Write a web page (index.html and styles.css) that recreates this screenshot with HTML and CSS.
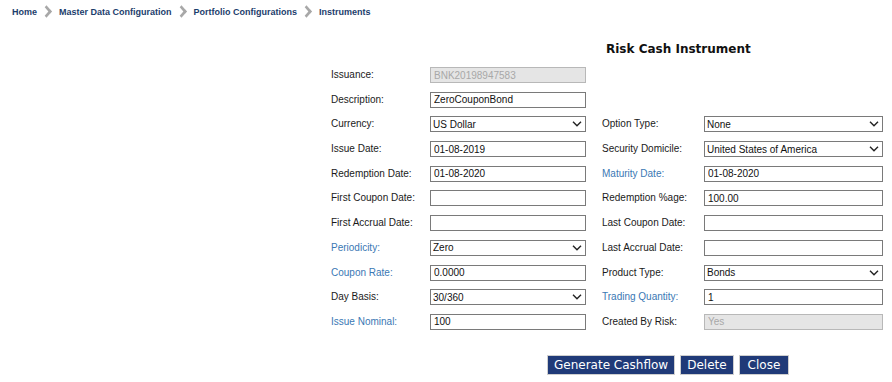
FILE: index.html
```html
<!DOCTYPE html>
<html lang="en">
  <head>
    <meta charset="UTF-8" />
    <title>Risk Cash Instrument</title>
    <link rel="stylesheet" href="styles.css">
  </head>
  <body>
    <div class="breadcrumb">
      <a href="#">Home</a>
      <span class="sep"></span>
      <a href="#">Master Data Configuration</a>
      <span class="sep"></span>
      <a href="#">Portfolio Configurations</a>
      <span class="sep"></span>
      <a href="#">Instruments</a>
    </div>

    <h1 class="page-title">Risk Cash Instrument</h1>

    <form class="instrument-form">
      <div class="form-row">
        <label>Issuance:</label>
        <input type="text" class="disabled" value="BNK20198947583" disabled />
      </div>

      <div class="form-row">
        <label>Description:</label>
        <input type="text" value="ZeroCouponBond" />
      </div>

      <div class="form-row">
        <label>Currency:</label>
        <select><option>US Dollar</option></select>
        <label class="right">Option Type:</label>
        <select><option>None</option></select>
      </div>

      <div class="form-row">
        <label>Issue Date:</label>
        <input type="text" value="01-08-2019" />
        <label class="right">Security Domicile:</label>
        <select><option>United States of America</option></select>
      </div>

      <div class="form-row">
        <label>Redemption Date:</label>
        <input type="text" value="01-08-2020" />
        <label class="right req">Maturity Date:</label>
        <input type="text" value="01-08-2020" />
      </div>

      <div class="form-row">
        <label>First Coupon Date:</label>
        <input type="text" value="" />
        <label class="right">Redemption %age:</label>
        <input type="text" value="100.00" />
      </div>

      <div class="form-row">
        <label>First Accrual Date:</label>
        <input type="text" value="" />
        <label class="right">Last Coupon Date:</label>
        <input type="text" value="" />
      </div>

      <div class="form-row">
        <label class="req">Periodicity:</label>
        <select><option>Zero</option></select>
        <label class="right">Last Accrual Date:</label>
        <input type="text" value="" />
      </div>

      <div class="form-row">
        <label class="req">Coupon Rate:</label>
        <input type="text" value="0.0000" />
        <label class="right">Product Type:</label>
        <select><option>Bonds</option></select>
      </div>

      <div class="form-row">
        <label>Day Basis:</label>
        <select><option>30/360</option></select>
        <label class="right req">Trading Quantity:</label>
        <input type="text" value="1" />
      </div>

      <div class="form-row">
        <label class="req">Issue Nominal:</label>
        <input type="text" value="100" />
        <label class="right">Created By Risk:</label>
        <input type="text" class="disabled" value="Yes" disabled />
      </div>
    </form>

    <div class="actions">
      <button class="button">Generate Cashflow</button>
      <button class="button">Delete</button>
      <button class="button close">Close</button>
    </div>
  </body>
</html>
```

FILE: styles.css
```css
:root {
  --link-color: #1c3d6c;
  --label-color: #1a1a1a;
  --required-color: #3a78b4;
  --field-border: #7a7a7a;
  --button-color: #203a78;
}

* {
  box-sizing: border-box;
}

body {
  margin: 0;
  background: white;
  font-family: 'Liberation Sans', Arial, sans-serif;
  font-size: 10px;
  color: var(--label-color);
}

.breadcrumb {
  display: flex;
  align-items: center;
  height: 23px;
  padding: 0 12px;
}

.breadcrumb a {
  color: var(--link-color);
  font-weight: bold;
  font-size: 9px;
  text-decoration: none;
}

.sep {
  display: inline-block;
  width: 9px;
  height: 9px;
  margin: 0 8px 0 5px;
  border-top: 3px solid #a8a8a8;
  border-right: 3px solid #a8a8a8;
  transform: scaleX(0.85) rotate(45deg);
}

.page-title {
  margin: 18px 0 0 606px;
  font-family: 'DejaVu Sans', Verdana, sans-serif;
  font-size: 12px;
  font-weight: bold;
  color: #111;
  line-height: 16px;
}

.instrument-form {
  margin: 10px 0 0 331px;
}

.form-row {
  display: grid;
  grid-template-columns: 99px 156px 16px 102px 179px;
  height: 16px;
  margin-bottom: 8.7px;
  align-items: center;
}

.form-row label {
  line-height: 16px;
}

.form-row label.right {
  grid-column: 4;
}

.form-row label.req {
  color: var(--required-color);
}

.form-row input,
.form-row select {
  height: 16px;
  width: 100%;
  margin: 0;
  padding: 0 3px;
  border: 1px solid var(--field-border);
  border-radius: 0;
  background: white;
  font-family: 'Liberation Sans', Arial, sans-serif;
  font-size: 10px;
  color: #111;
  outline: none;
}

.form-row select {
  appearance: none;
  -webkit-appearance: none;
  padding: 0 2px;
  background-image: url("data:image/svg+xml,%3Csvg xmlns='http://www.w3.org/2000/svg' width='10' height='6' viewBox='0 0 10 6'%3E%3Cpath d='M1 0.8 L5 4.8 L9 0.8' fill='none' stroke='%23222' stroke-width='1.4'/%3E%3C/svg%3E");
  background-repeat: no-repeat;
  background-position: right 3px center;
}

.form-row input.disabled {
  background: #e5e5e5;
  border-color: #b8b8b8;
  color: #a8a8a8;
}

.actions {
  display: flex;
  gap: 5px;
  margin: 25px 0 0 547px;
}

.button {
  height: 20px;
  padding: 0 6px;
  border: 1px solid #cfcfcf;
  background-color: var(--button-color);
  color: white;
  font-family: 'DejaVu Sans', Verdana, sans-serif;
  font-size: 12px;
  line-height: 18px;
  cursor: pointer;
}

.button.close {
  padding: 0 8px;
}
```
